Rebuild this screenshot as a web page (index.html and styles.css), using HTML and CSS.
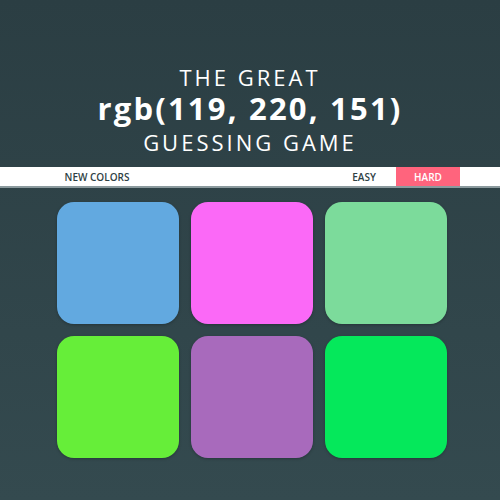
FILE: index.html
```html
<!DOCTYPE html>
<html>
<head>
<meta charset="utf-8">
<link rel="stylesheet" href="styles.css">
</head>
<body>
<header class="header">
  <div class="line-small">THE GREAT</div>
  <div class="line-big">rgb(119, 220, 151)</div>
  <div class="line-small">GUESSING GAME</div>
</header>
<nav class="bar">
  <span class="btn new">NEW COLORS</span>
  <span class="spacer"></span>
  <span class="btn easy">EASY</span>
  <span class="btn hard">HARD</span>
</nav>
<main class="grid">
  <div class="sq" style="background:#62a9e0"></div>
  <div class="sq" style="background:#fb69f7"></div>
  <div class="sq" style="background:#7cdb9b"></div>
  <div class="sq" style="background:#66ee39"></div>
  <div class="sq" style="background:#a86abc"></div>
  <div class="sq" style="background:#05e85b"></div>
</main>
</body>
</html>
```
FILE: styles.css
```css
html, body {
  margin: 0;
  padding: 0;
  height: 100%;
}
body {
  background: linear-gradient(#2b3e43, #344a4f);
  font-family: "Open Sans", "DejaVu Sans", sans-serif;
  color: #fff;
}
.header {
  padding-top: 64px;
  text-align: center;
}
.line-small {
  font-size: 22px;
  line-height: 26px;
  letter-spacing: 3px;
  font-weight: 400;
}
.line-big {
  font-size: 31px;
  line-height: 36px;
  font-weight: 700;
  letter-spacing: 2.2px;
  margin: 0 0 3px;
}
.bar {
  margin-top: 12px;
  background: #fff;
  height: 19px;
  border-bottom: 2px solid #8b9a9e;
  display: flex;
  align-items: stretch;
  font-size: 10px;
  font-weight: 600;
  color: #2f3f44;
}
.btn {
  display: flex;
  align-items: center;
  justify-content: center;
}
.new {
  width: 194px;
}
.spacer { flex: 1; }
.easy { width: 64px; }
.hard {
  width: 64px;
  margin-right: 40px;
  background: #ff647d;
  color: #fff;
}
.grid {
  display: grid;
  grid-template-columns: repeat(3, 122px);
  grid-auto-rows: 122px;
  gap: 12px;
  margin: 14px 0 0 57px;
}
.sq {
  border-radius: 17px;
  box-shadow: 0 1px 3px rgba(0,0,0,0.25);
}
```
